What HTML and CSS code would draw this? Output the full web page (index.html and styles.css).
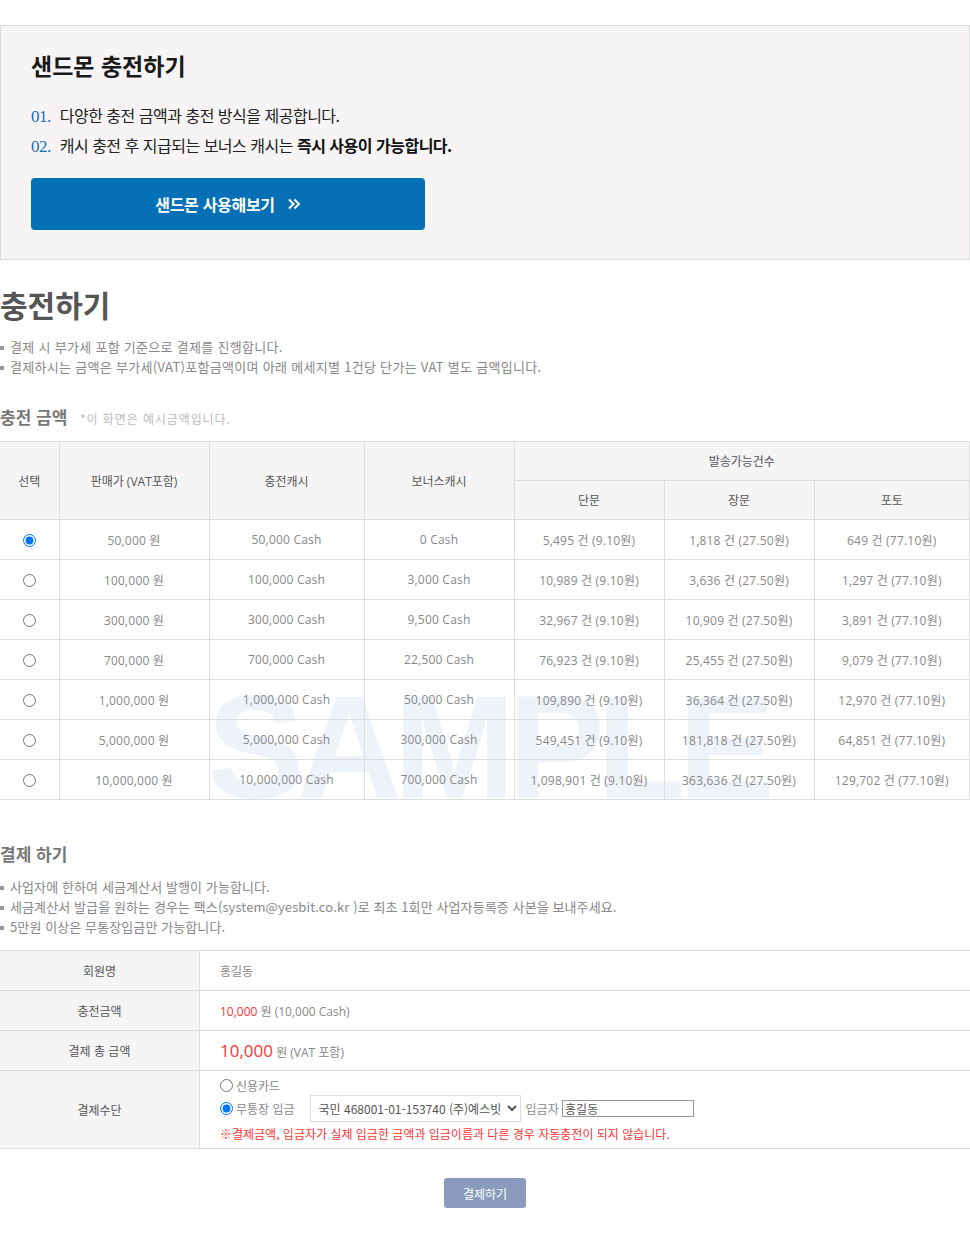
FILE: index.html
```html
<!DOCTYPE html>
<html lang="ko">
<head>
  <meta charset="UTF-8">
  <meta name="viewport" content="width=device-width, initial-scale=1.0">
  <title>샌드몬 충전하기</title>
  <link rel="stylesheet" href="styles.css">
</head>
<body>
  <div class="wrap">
    <section class="intro">
      <h1>샌드몬 충전하기</h1>
      <ul class="intro-list">
        <li><span class="num">01.</span> 다양한 충전 금액과 충전 방식을 제공합니다.</li>
        <li><span class="num">02.</span> 캐시 충전 후 지급되는 보너스 캐시는 <strong>즉시 사용이 가능합니다.</strong></li>
      </ul>
      <a class="try-btn" href="#">샌드몬 사용해보기
        <svg width="14" height="12" viewBox="0 0 14 12"><path d="M2 1.5 L6.5 6 L2 10.5 M7.5 1.5 L12 6 L7.5 10.5" fill="none" stroke="#fff" stroke-width="2"/></svg>
      </a>
    </section>

    <h2 class="page-title">충전하기</h2>
    <ul class="notes">
      <li>결제 시 부가세 포함 기준으로 결제를 진행합니다.</li>
      <li>결제하시는 금액은 부가세(VAT)포함금액이며 아래 메세지별 1건당 단가는 VAT 별도 금액입니다.</li>
    </ul>

    <h3 class="sub-title">충전 금액 <span class="hint">*이 화면은 예시금액입니다.</span></h3>

    <div class="price-box">
      <div class="watermark" aria-hidden="true">SAMPLE</div>
      <table class="price-table">
        <colgroup>
          <col style="width:59px"><col style="width:150px"><col style="width:155px"><col style="width:150px">
          <col style="width:150px"><col style="width:150px"><col>
        </colgroup>
        <thead>
          <tr>
            <th rowspan="2">선택</th>
            <th rowspan="2">판매가 (VAT포함)</th>
            <th rowspan="2">충전캐시</th>
            <th rowspan="2">보너스캐시</th>
            <th colspan="3">발송가능건수</th>
          </tr>
          <tr>
            <th>단문</th>
            <th>장문</th>
            <th>포토</th>
          </tr>
        </thead>
        <tbody>
          <tr><td><input type="radio" name="amount" checked></td><td>50,000 원</td><td>50,000 Cash</td><td>0 Cash</td><td>5,495 건 (9.10원)</td><td>1,818 건 (27.50원)</td><td>649 건 (77.10원)</td></tr>
          <tr><td><input type="radio" name="amount"></td><td>100,000 원</td><td>100,000 Cash</td><td>3,000 Cash</td><td>10,989 건 (9.10원)</td><td>3,636 건 (27.50원)</td><td>1,297 건 (77.10원)</td></tr>
          <tr><td><input type="radio" name="amount"></td><td>300,000 원</td><td>300,000 Cash</td><td>9,500 Cash</td><td>32,967 건 (9.10원)</td><td>10,909 건 (27.50원)</td><td>3,891 건 (77.10원)</td></tr>
          <tr><td><input type="radio" name="amount"></td><td>700,000 원</td><td>700,000 Cash</td><td>22,500 Cash</td><td>76,923 건 (9.10원)</td><td>25,455 건 (27.50원)</td><td>9,079 건 (77.10원)</td></tr>
          <tr><td><input type="radio" name="amount"></td><td>1,000,000 원</td><td>1,000,000 Cash</td><td>50,000 Cash</td><td>109,890 건 (9.10원)</td><td>36,364 건 (27.50원)</td><td>12,970 건 (77.10원)</td></tr>
          <tr><td><input type="radio" name="amount"></td><td>5,000,000 원</td><td>5,000,000 Cash</td><td>300,000 Cash</td><td>549,451 건 (9.10원)</td><td>181,818 건 (27.50원)</td><td>64,851 건 (77.10원)</td></tr>
          <tr><td><input type="radio" name="amount"></td><td>10,000,000 원</td><td>10,000,000 Cash</td><td>700,000 Cash</td><td>1,098,901 건 (9.10원)</td><td>363,636 건 (27.50원)</td><td>129,702 건 (77.10원)</td></tr>
        </tbody>
      </table>
    </div>

    <h3 class="sub-title pay-title">결제 하기</h3>
    <ul class="notes pay-notes">
      <li>사업자에 한하여 세금계산서 발행이 가능합니다.</li>
      <li>세금계산서 발급을 원하는 경우는 팩스(system@yesbit.co.kr )로 최초 1회만 사업자등록증 사본을 보내주세요.</li>
      <li>5만원 이상은 무통장입금만 가능합니다.</li>
    </ul>

    <table class="pay-table">
      <tr><th>회원명</th><td>홍길동</td></tr>
      <tr><th>충전금액</th><td><span class="red">10,000</span> 원 (10,000 Cash)</td></tr>
      <tr><th>결제 총 금액</th><td><span class="red big">10,000</span> 원 (VAT 포함)</td></tr>
      <tr class="method-row">
        <th>결제수단</th>
        <td>
          <label class="opt"><input type="radio" name="pay"> 신용카드</label>
          <div class="bank-line">
            <label class="opt"><input type="radio" name="pay" checked> 무통장 입금</label>
            <select class="bank-select"><option>국민 468001-01-153740 (주)예스빗</option></select>
            <span class="depositor">입금자 <input type="text" value="홍길동"></span>
          </div>
          <p class="warn">※결제금액, 입금자가 실제 입금한 금액과 입금이름과 다른 경우 자동충전이 되지 않습니다.</p>
        </td>
      </tr>
    </table>

    <div class="submit-area">
      <button class="pay-btn">결제하기</button>
    </div>
  </div>
</body>
</html>
```

FILE: styles.css
```css
body {
  margin: 0;
  padding: 0;
  background: #fff;
  font-family: "Noto Sans CJK KR", "Noto Sans", sans-serif;
  color: #555;
}
.wrap {
  width: 970px;
  padding-top: 25px;
}
.intro {
  background: #f6f4f5;
  border: 1px solid #dcdcdc;
  padding: 21px 30px 29px;
}
.intro h1 {
  margin: 0;
  font-size: 23px;
  line-height: 36px;
  color: #1a1a1a;
  font-weight: bold;
}
.intro-list {
  list-style: none;
  margin: 17px 0 0;
  padding: 0;
}
.intro-list li {
  font-size: 16px;
  line-height: 30px;
  height: 30px;
  color: #222;
  letter-spacing: -0.5px;
}
.intro-list strong {
  color: #111;
}
.intro-list .num {
  font-family: "Liberation Serif", serif;
  color: #1b6db5;
  font-size: 17px;
  line-height: 1;
  margin-right: 5px;
}
.try-btn {
  display: flex;
  justify-content: center;
  align-items: center;
  gap: 12px;
  width: 394px;
  height: 52px;
  margin-top: 18px;
  background: #0570b6;
  color: #fff;
  border-radius: 4px;
  font-size: 16px;
  font-weight: bold;
  text-decoration: none;
  letter-spacing: -0.3px;
}
.page-title {
  margin: 24px 0 0;
  font-size: 30px;
  line-height: 40px;
  color: #555;
  font-weight: bold;
}
.notes {
  list-style: none;
  margin: 13px 0 0;
  padding: 0;
}
.notes li {
  position: relative;
  padding-left: 10px;
  font-size: 13px;
  line-height: 20px;
  color: #888;
  letter-spacing: 0.3px;
}
.notes li::before {
  content: "";
  position: absolute;
  left: 0;
  top: 9px;
  width: 4px;
  height: 4px;
  background: #999;
}
.sub-title {
  margin: 28px 0 0;
  font-size: 17px;
  line-height: 24px;
  color: #777;
  font-weight: bold;
}
.sub-title .hint {
  margin-left: 8px;
  font-size: 12px;
  font-weight: normal;
  color: #bbb;
  letter-spacing: 0.9px;
}
.price-box {
  position: relative;
  margin-top: 10px;
  overflow: hidden;
}
.watermark {
  position: absolute;
  left: 207px;
  top: 234px;
  font-family: "Liberation Sans", sans-serif;
  font-weight: bold;
  font-size: 146px;
  line-height: 1;
  letter-spacing: -8px;
  color: #eef3f9;
  z-index: 0;
}
.price-table {
  position: relative;
  z-index: 1;
  width: 970px;
  table-layout: fixed;
  border-collapse: collapse;
  font-family: "Open Sans", "Noto Sans CJK KR", sans-serif;
  font-size: 12px;
}
.price-table th,
.price-table td {
  border: 1px solid #ddd;
  text-align: center;
  padding: 0;
}
.price-table th:first-child,
.price-table td:first-child {
  border-left: none;
}
.price-table th {
  background: #f5f5f5;
  font-weight: normal;
  color: #555;
  height: 38px;
}
.price-table td {
  height: 39px;
  color: #888;
  letter-spacing: 0.2px;
}
.price-table input[type="radio"] {
  margin: 0;
  width: 13px;
  height: 13px;
  vertical-align: middle;
}
.pay-title {
  margin-top: 42px;
}
.pay-notes {
  margin-top: 11px;
}
.pay-notes li {
  letter-spacing: 0.1px;
}
.notes + .pay-table {
  margin-top: 13px;
}
.pay-table {
  width: 970px;
  border-collapse: collapse;
  font-size: 12px;
}
.pay-table th,
.pay-table td {
  border-top: 1px solid #ddd;
  border-bottom: 1px solid #ddd;
  height: 39px;
  padding: 0;
}
.pay-table th {
  width: 199px;
  background: #f5f5f5;
  border-right: 1px solid #ddd;
  font-weight: normal;
  color: #555;
}
.pay-table td {
  padding-left: 20px;
  color: #888;
  font-family: "Open Sans", "Noto Sans CJK KR", sans-serif;
}
.pay-table .red {
  color: #f33;
}
.pay-table .big {
  font-size: 17px;
}
.method-row td {
  padding-top: 6px;
  padding-bottom: 6px;
  height: auto;
  font-family: "Noto Sans CJK KR", sans-serif;
}
.opt {
  display: inline-flex;
  align-items: center;
  gap: 3px;
  color: #888;
}
.opt input {
  margin: 0;
  width: 13px;
  height: 13px;
}
.bank-line {
  display: flex;
  align-items: center;
}
.bank-select {
  margin-left: 15px;
  width: 211px;
  height: 27px;
  border: 1px solid #ddd;
  background: #fff;
  color: #555;
  font-size: 12px;
  font-family: "Noto Sans CJK KR", sans-serif;
  padding: 0 4px;
}
.depositor {
  margin-left: 5px;
  color: #888;
}
.depositor input {
  width: 126px;
  height: 15px;
  padding: 0 2px;
  border: 1px solid #999;
  font-size: 12px;
  color: #555;
  font-family: "Noto Sans CJK KR", sans-serif;
}
.warn {
  margin: 3px 0 0;
  color: #f33;
  font-size: 12px;
}
.submit-area {
  display: flex;
  justify-content: center;
  padding: 29px 0 40px;
}
.pay-btn {
  width: 82px;
  height: 30px;
  background: #8b9bbd;
  border: none;
  border-radius: 3px;
  color: #fff;
  font-size: 12px;
  font-family: "Noto Sans CJK KR", sans-serif;
}
```
